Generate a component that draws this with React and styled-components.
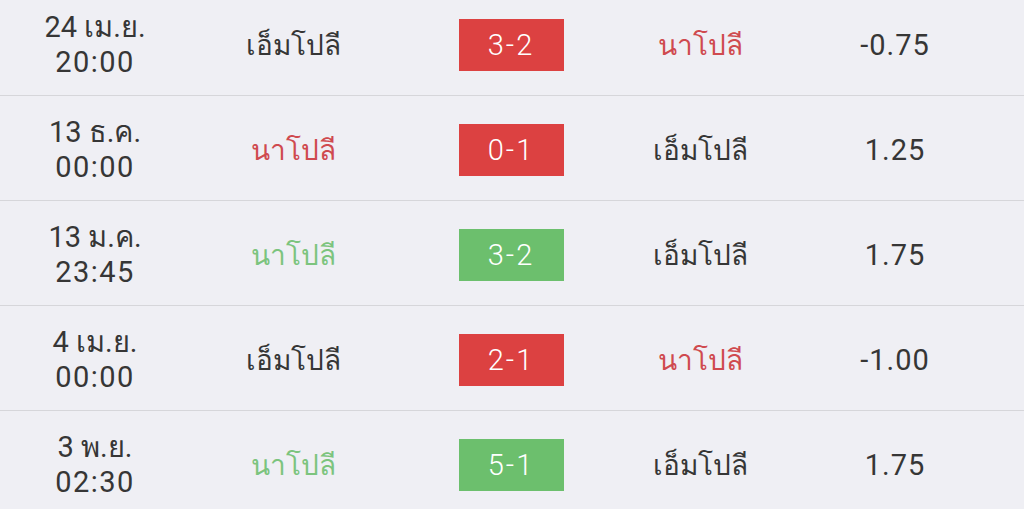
import React from "react";
import styled, { createGlobalStyle } from "styled-components";

const Global = createGlobalStyle`
  html, body { margin: 0; padding: 0; background: #efeff4; }
  body { font-family: Roboto, "Noto Sans", sans-serif; overflow: hidden; }
`;

const List = styled.div`
  margin-top: -9px;
  width: 1024px;
`;

const Row = styled.div`
  display: grid;
  grid-template-columns: 190px 206px 230px 148px 242px;
  align-items: center;
  box-sizing: border-box;
  height: 105px;
  padding-top: 3px;
  border-bottom: 1px solid #d6d6da;
`;

const DateCell = styled.div`
  text-align: center;
  color: #363636;
  font-size: 29px;
  line-height: 35px;
`;

const Time = styled.span`
  letter-spacing: 1.5px;
`;

const Team = styled.div`
  text-align: center;
  font-size: 28px;
  color: ${(p) => (p.$tone === "red" ? "#cf4a4f" : p.$tone === "green" ? "#7cc47e" : "#363636")};
`;

const ScoreCell = styled.div`
  display: flex;
  justify-content: center;
`;

const Score = styled.div`
  width: 105px;
  height: 52px;
  display: flex;
  align-items: center;
  justify-content: center;
  font-size: 29px;
  font-weight: 300;
  letter-spacing: 2px;
  color: #fff;
  background: ${(p) => (p.$win ? "#6cbf6d" : "#dc4141")};
`;

const Odds = styled.div`
  text-align: center;
  font-size: 29px;
  letter-spacing: 1px;
  color: #363636;
`;

const rows = [
  { d: "24 เม.ย.", t: "20:00", home: "เอ็มโปลี", ht: "", score: "3-2", win: false, away: "นาโปลี", at: "red", odds: "-0.75" },
  { d: "13 ธ.ค.", t: "00:00", home: "นาโปลี", ht: "red", score: "0-1", win: false, away: "เอ็มโปลี", at: "", odds: "1.25" },
  { d: "13 ม.ค.", t: "23:45", home: "นาโปลี", ht: "green", score: "3-2", win: true, away: "เอ็มโปลี", at: "", odds: "1.75" },
  { d: "4 เม.ย.", t: "00:00", home: "เอ็มโปลี", ht: "", score: "2-1", win: false, away: "นาโปลี", at: "red", odds: "-1.00" },
  { d: "3 พ.ย.", t: "02:30", home: "นาโปลี", ht: "green", score: "5-1", win: true, away: "เอ็มโปลี", at: "", odds: "1.75" },
];

export default function App() {
  return (
    <>
      <Global />
      <List>
        {rows.map((r, i) => (
          <Row key={i}>
            <DateCell>
              {r.d}
              <br />
              <Time>{r.t}</Time>
            </DateCell>
            <Team $tone={r.ht}>{r.home}</Team>
            <ScoreCell>
              <Score $win={r.win}>{r.score}</Score>
            </ScoreCell>
            <Team $tone={r.at}>{r.away}</Team>
            <Odds>{r.odds}</Odds>
          </Row>
        ))}
      </List>
    </>
  );
}
